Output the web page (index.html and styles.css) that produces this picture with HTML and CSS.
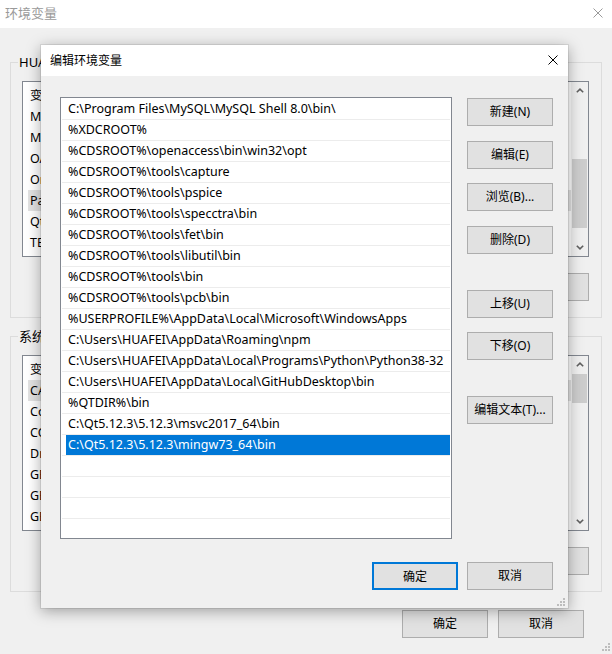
FILE: index.html
```html
<!DOCTYPE html>
<html lang="zh-CN">
<head>
<meta charset="utf-8">
<title>编辑环境变量</title>
<link rel="stylesheet" href="styles.css">
</head>
<body>
<div class="win">
  <div class="win-title">
    <span class="win-title-text">环境变量</span>
    <svg class="x-icon x-gray" viewBox="0 0 10 10"><path d="M0.5 0.5L9.5 9.5M9.5 0.5L0.5 9.5"/></svg>
  </div>
  <div class="win-body">
    <fieldset class="group">
      <legend>HUAFEI 的用户变量(U)</legend>
      <div class="lv">
        <div class="lv-main">
          <div class="lv-head"><span>变量</span><span>值</span></div>
          <div class="lv-row"><span>MOZ_PLUGIN_PATH</span></div>
          <div class="lv-row"><span>MSMPI_BIN</span></div>
          <div class="lv-row"><span>OANNOTATION</span></div>
          <div class="lv-row"><span>OneDrive</span></div>
          <div class="lv-row sel"><span>Path</span></div>
          <div class="lv-row"><span>QtDIR</span></div>
          <div class="lv-row"><span>TEMP</span></div>
        </div>
        <div class="sb">
          <div class="sb-btn"><svg class="chev" viewBox="0 0 8 5"><path d="M0.8 4.3L4 1.2L7.2 4.3"/></svg></div>
          <div class="sb-track"><div class="sb-thumb thumb-user"></div></div>
          <div class="sb-btn"><svg class="chev" viewBox="0 0 8 5"><path d="M0.8 0.7L4 3.8L7.2 0.7"/></svg></div>
        </div>
      </div>
      <div class="grp-btns">
        <button class="btn">新建(N)...</button>
        <button class="btn">编辑(E)...</button>
        <button class="btn">删除(D)</button>
      </div>
    </fieldset>
    <fieldset class="group">
      <legend>系统变量(S)</legend>
      <div class="lv">
        <div class="lv-main">
          <div class="lv-head"><span>变量</span><span>值</span></div>
          <div class="lv-row sel"><span>CADENCE_DIR</span></div>
          <div class="lv-row"><span>ComSpec</span></div>
          <div class="lv-row"><span>CONFIGSETROOT</span></div>
          <div class="lv-row"><span>DriverData</span></div>
          <div class="lv-row"><span>GEM_HOME</span></div>
          <div class="lv-row"><span>GEM_PATH</span></div>
          <div class="lv-row"><span>GEMPATH</span></div>
        </div>
        <div class="sb">
          <div class="sb-btn"><svg class="chev" viewBox="0 0 8 5"><path d="M0.8 4.3L4 1.2L7.2 4.3"/></svg></div>
          <div class="sb-track"><div class="sb-thumb thumb-sys"></div></div>
          <div class="sb-btn"><svg class="chev" viewBox="0 0 8 5"><path d="M0.8 0.7L4 3.8L7.2 0.7"/></svg></div>
        </div>
      </div>
      <div class="grp-btns">
        <button class="btn">新建(W)...</button>
        <button class="btn">编辑(I)...</button>
        <button class="btn">删除(L)</button>
      </div>
    </fieldset>
    <div class="win-foot">
      <button class="btn">确定</button>
      <button class="btn">取消</button>
    </div>
  </div>
  <svg class="grip grip-win" viewBox="0 0 8 8"><rect x="6" y="0" width="2" height="2"/><rect x="3" y="3" width="2" height="2"/><rect x="6" y="3" width="2" height="2"/><rect x="0" y="6" width="2" height="2"/><rect x="3" y="6" width="2" height="2"/><rect x="6" y="6" width="2" height="2"/></svg>
</div>

<div class="dlg">
  <div class="dlg-title">
    <span class="dlg-title-text">编辑环境变量</span>
    <svg class="x-icon x-dark" viewBox="0 0 10 10"><path d="M0.5 0.5L9.5 9.5M9.5 0.5L0.5 9.5"/></svg>
  </div>
  <div class="dlg-body">
    <div class="dlg-main">
      <div class="plist">
        <div class="prow"><span>C:\Program Files\MySQL\MySQL Shell 8.0\bin\</span></div>
        <div class="prow"><span>%XDCROOT%</span></div>
        <div class="prow"><span>%CDSROOT%\openaccess\bin\win32\opt</span></div>
        <div class="prow"><span>%CDSROOT%\tools\capture</span></div>
        <div class="prow"><span>%CDSROOT%\tools\pspice</span></div>
        <div class="prow"><span>%CDSROOT%\tools\specctra\bin</span></div>
        <div class="prow"><span>%CDSROOT%\tools\fet\bin</span></div>
        <div class="prow"><span>%CDSROOT%\tools\libutil\bin</span></div>
        <div class="prow"><span>%CDSROOT%\tools\bin</span></div>
        <div class="prow"><span>%CDSROOT%\tools\pcb\bin</span></div>
        <div class="prow"><span>%USERPROFILE%\AppData\Local\Microsoft\WindowsApps</span></div>
        <div class="prow"><span>C:\Users\HUAFEI\AppData\Roaming\npm</span></div>
        <div class="prow"><span>C:\Users\HUAFEI\AppData\Local\Programs\Python\Python38-32</span></div>
        <div class="prow"><span>C:\Users\HUAFEI\AppData\Local\GitHubDesktop\bin</span></div>
        <div class="prow"><span>%QTDIR%\bin</span></div>
        <div class="prow"><span>C:\Qt5.12.3\5.12.3\msvc2017_64\bin</span></div>
        <div class="prow sel"><span>C:\Qt5.12.3\5.12.3\mingw73_64\bin</span></div>
        <div class="prow"><span></span></div>
        <div class="prow"><span></span></div>
        <div class="prow"><span></span></div>
        <div class="prow"><span></span></div>
      </div>
      <div class="btncol">
        <button class="btn mt1">新建(N)</button>
        <button class="btn mt15">编辑(E)</button>
        <button class="btn mt14">浏览(B)...</button>
        <button class="btn mt15">删除(D)</button>
        <button class="btn mt36">上移(U)</button>
        <button class="btn mt14">下移(O)</button>
        <button class="btn mt36">编辑文本(T)...</button>
      </div>
    </div>
    <div class="dlg-foot">
      <button class="btn btn-default">确定</button>
      <button class="btn">取消</button>
    </div>
  </div>
  <svg class="grip grip-dlg" viewBox="0 0 8 8"><rect x="6" y="0" width="2" height="2"/><rect x="3" y="3" width="2" height="2"/><rect x="6" y="3" width="2" height="2"/><rect x="0" y="6" width="2" height="2"/><rect x="3" y="6" width="2" height="2"/><rect x="6" y="6" width="2" height="2"/></svg>
</div>
</body>
</html>
```

FILE: styles.css
```css
* { box-sizing: border-box; }
html, body { margin: 0; padding: 0; }
body {
  width: 612px;
  height: 654px;
  overflow: hidden;
  position: relative;
  background: #f0f0f0;
  color: #000;
  font-family: "Noto Sans", "Noto Sans CJK SC", sans-serif;
  font-size: 12px;
}

/* background window */
.win {
  position: relative;
  width: 612px;
  height: 654px;
  background: #f0f0f0;
  display: flex;
  flex-direction: column;
}
.win-title {
  height: 28px;
  flex: none;
  background: #fff;
  display: flex;
  align-items: center;
  justify-content: space-between;
  padding: 0 9px 3px 5px;
}
.win-title-text { color: #9a9a9a; font-size: 13px; }

.x-icon { width: 10px; height: 10px; fill: none; stroke-width: 1; }
.x-gray { stroke: #9a9a9a; }
.x-dark { stroke: #000; }

.win-body {
  padding: 0 10px;
  display: flex;
  flex-direction: column;
}
.group {
  margin: 25px 0 0;
  padding: 10px 12px 16px 11px;
  border: 1px solid #dcdcdc;
  min-width: 0;
}
.group + .group { margin-top: 9px; }
.group legend {
  padding: 0 1px;
  margin-left: -4px;
  font-size: 13px;
  line-height: 18px;
}

.lv {
  height: 176px;
  border: 1px solid #828790;
  background: #fff;
  display: flex;
}
.lv-main { flex: 1; overflow: hidden; font-size: 12.5px; }
.lv-head {
  height: 24px;
  display: flex;
  align-items: center;
  padding-left: 7px;
}
.lv-head span { width: 160px; }
.lv-row {
  height: 21px;
  padding-left: 5px;
  display: flex;
}
.lv-row span {
  flex: 1;
  padding-left: 2px;
  line-height: 21px;
  white-space: nowrap;
}
.lv-row.sel span { background: #e2e2e2; }

.sb {
  width: 17px;
  flex: none;
  background: #f0f0f0;
  display: flex;
  flex-direction: column;
}
.sb-btn {
  height: 17px;
  flex: none;
  display: flex;
  align-items: center;
  justify-content: center;
}
.chev { width: 8px; height: 5px; fill: none; stroke: #606060; stroke-width: 1.6; }
.sb-track { flex: 1; padding: 0 1px; }
.sb-thumb { background: #cdcdcd; }
.thumb-user { margin-top: 60px; height: 69px; }
.thumb-sys { margin-top: 1px; height: 29px; }

.grp-btns {
  margin-top: 16px;
  display: flex;
  justify-content: flex-end;
  gap: 10px;
}
.win-foot {
  margin-top: 18px;
  padding-right: 18px;
  display: flex;
  justify-content: flex-end;
  gap: 10px;
}

.btn {
  width: 86px;
  height: 28px;
  flex: none;
  margin: 0;
  padding: 0;
  background: #e1e1e1;
  border: 1px solid #adadad;
  border-radius: 0;
  color: #000;
  font-family: "Noto Sans", "Noto Sans CJK SC", sans-serif;
  font-size: 12px;
  line-height: 26px;
}
.btn-default { border: 2px solid #0078d7; }

.grip { position: absolute; width: 8px; height: 8px; fill: #bdbdbd; }
.grip-win { right: 2px; bottom: 3px; }
.grip-dlg { right: 3px; bottom: 2px; }

/* front dialog */
.dlg {
  position: absolute;
  left: 41px;
  top: 45px;
  width: 527px;
  height: 563px;
  background: #f0f0f0;
  box-shadow: 0 0 0 1px rgba(0, 0, 0, 0.08), 0 3px 14px rgba(0, 0, 0, 0.35);
  display: flex;
  flex-direction: column;
}
.dlg-title {
  height: 31px;
  flex: none;
  background: #fff;
  display: flex;
  align-items: center;
  justify-content: space-between;
  padding: 0 10px 1px 9px;
}
.dlg-title-text { font-size: 12px; }
.dlg-body {
  flex: 1;
  padding: 21px 15px 0 19px;
  display: flex;
  flex-direction: column;
}
.dlg-main {
  height: 442px;
  display: flex;
  gap: 15px;
}
.plist {
  width: 392px;
  flex: none;
  border: 1px solid #828790;
  background: #fff;
  padding: 1px 1px 0;
  overflow: hidden;
}
.prow {
  height: 21px;
  border-bottom: 1px solid #ececec;
  padding-left: 4px;
  display: flex;
}
.prow span {
  flex: 1;
  padding-left: 2px;
  font-size: 12.5px;
  line-height: 20px;
  white-space: nowrap;
  overflow: hidden;
}
.prow.sel span { background: #0078d7; color: #fff; }

.btncol { display: flex; flex-direction: column; }
.mt1 { margin-top: 1px; }
.mt14 { margin-top: 14px; }
.mt15 { margin-top: 15px; }
.mt36 { margin-top: 36px; }

.dlg-foot {
  margin-top: 23px;
  display: flex;
  justify-content: flex-end;
  gap: 9px;
}
```
